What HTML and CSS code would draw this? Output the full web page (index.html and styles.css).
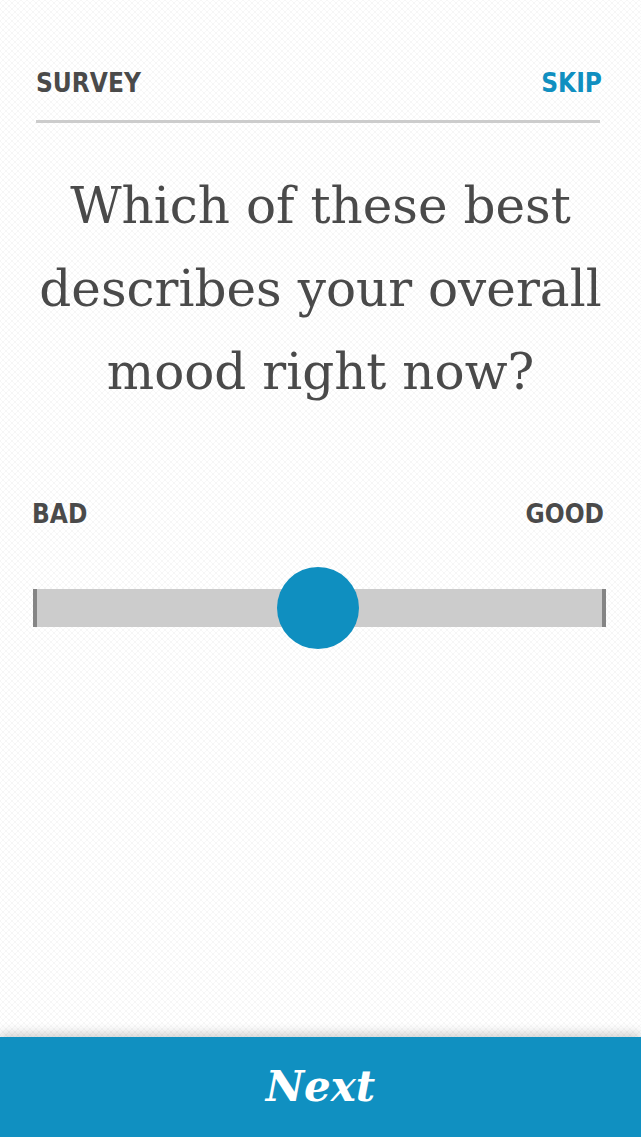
FILE: index.html
```html
<!DOCTYPE html>
<html lang="en">
<head>
<meta charset="utf-8">
<title>Survey</title>
<link rel="stylesheet" href="styles.css">
</head>
<body>
<div class="page">
  <header class="header">
    <span class="title">SURVEY</span>
    <span class="skip">SKIP</span>
  </header>
  <h1 class="question">Which of these best describes your overall mood right now?</h1>
  <div class="labels">
    <span>BAD</span>
    <span>GOOD</span>
  </div>
  <div class="slider">
    <div class="track"></div>
    <div class="knob"></div>
  </div>
  <div class="spacer"></div>
  <footer class="next">Next</footer>
</div>
</body>
</html>
```

FILE: styles.css
```css
html, body {
  margin: 0;
  padding: 0;
}
body {
  width: 641px;
  height: 1137px;
  overflow: hidden;
  background-color: #f6f6f6;
  background-image: radial-gradient(circle, #ffffff 1.6px, transparent 2.2px),
                    radial-gradient(circle, #ffffff 1.6px, transparent 2.2px);
  background-size: 6px 6px;
  background-position: 0 0, 3px 3px;
}
.page {
  height: 1137px;
  display: flex;
  flex-direction: column;
}
.header {
  margin: 0 41px 0 36px;
  padding-top: 68px;
  padding-bottom: 22px;
  border-bottom: 3px solid #cccccc;
  display: flex;
  justify-content: space-between;
  font-family: "DejaVu Sans Condensed", "DejaVu Sans", sans-serif;
  font-weight: bold;
  font-size: 26px;
  line-height: 30px;
}
.title { color: #4a4a4a; }
.skip { color: #108fc0; margin-right: -2px; }
.question {
  margin: 42px 20px 0 20px;
  font-family: "DejaVu Serif", Georgia, serif;
  font-weight: normal;
  font-size: 50px;
  line-height: 83px;
  text-align: center;
  color: #4a4a4a;
}
.labels {
  margin: 85px 37px 0 32px;
  display: flex;
  justify-content: space-between;
  font-family: "DejaVu Sans Condensed", "DejaVu Sans", sans-serif;
  font-weight: bold;
  font-size: 26px;
  line-height: 30px;
  color: #4a4a4a;
}
.slider {
  position: relative;
  margin: 38px 35px 0 33px;
  height: 82px;
  display: flex;
  align-items: center;
}
.track {
  flex: 1;
  height: 38px;
  background: #cccccc;
  border-left: 4px solid #858585;
  border-right: 4px solid #858585;
}
.knob {
  position: absolute;
  left: 244px;
  top: 0;
  width: 82px;
  height: 82px;
  border-radius: 50%;
  background: #0f8fc0;
}
.spacer { flex: 1; }
.next {
  height: 100px;
  background: #1090c1;
  box-shadow: 0 -4px 10px rgba(0, 0, 0, 0.18);
  color: #ffffff;
  font-family: "DejaVu Serif", Georgia, serif;
  font-style: italic;
  font-weight: bold;
  font-size: 42px;
  line-height: 100px;
  text-align: center;
}
```
